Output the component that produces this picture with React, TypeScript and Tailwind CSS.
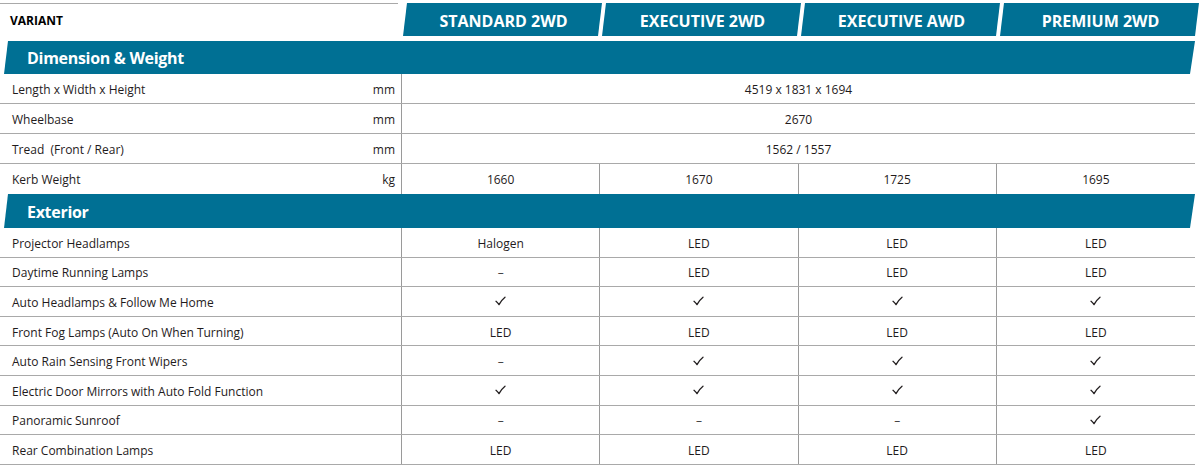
import React from "react";

const tabs = ["STANDARD 2WD", "EXECUTIVE 2WD", "EXECUTIVE AWD", "PREMIUM 2WD"];

type Row = { label: string; unit?: string; span?: string; vals?: string[] };

const dim: Row[] = [
  { label: "Length x Width x Height", unit: "mm", span: "4519 x 1831 x 1694" },
  { label: "Wheelbase", unit: "mm", span: "2670" },
  { label: "Tread\u00a0 (Front / Rear)", unit: "mm", span: "1562 / 1557" },
  { label: "Kerb Weight", unit: "kg", vals: ["1660", "1670", "1725", "1695"] },
];

const C = "\u2713";
const D = "\u2013";

const ext: Row[] = [
  { label: "Projector Headlamps", vals: ["Halogen", "LED", "LED", "LED"] },
  { label: "Daytime Running Lamps", vals: [D, "LED", "LED", "LED"] },
  { label: "Auto Headlamps & Follow Me Home", vals: [C, C, C, C] },
  { label: "Front Fog Lamps (Auto On When Turning)", vals: ["LED", "LED", "LED", "LED"] },
  { label: "Auto Rain Sensing Front Wipers", vals: [D, C, C, C] },
  { label: "Electric Door Mirrors with Auto Fold Function", vals: [C, C, C, C] },
  { label: "Panoramic Sunroof", vals: [D, D, D, C] },
  { label: "Rear Combination Lamps", vals: ["LED", "LED", "LED", "LED"] },
];

function Cell({ v }: { v: string }) {
  if (v === C)
    return (
      <svg width="11" height="10" viewBox="0 0 11 10" className="mb-[3px]">
        <path d="M1 5.3 Q2.8 6.8 4 8.6 Q6.5 4 10 1.2" fill="none" stroke="#231f20" strokeWidth="1.3" strokeLinecap="round" strokeLinejoin="round" />
      </svg>
    );
  if (v === D) return <span className="text-[#444]">{D}</span>;
  return <span>{v}</span>;
}

function DataRow({ r, h, last, pt = "pt-[3px]" }: { r: Row; h: string; last?: boolean; pt?: string }) {
  return (
    <div className={`flex w-[1195px] ${h} ${last ? "" : "border-b border-[#a9a9a9]"}`}>
      <div className={`flex w-[402px] shrink-0 items-center justify-between border-r border-[#9a9a9a] pl-[12px] pr-[6px] ${pt}`}>
        <span>{r.label}</span>
        {r.unit && <span>{r.unit}</span>}
      </div>
      {r.span ? (
        <div className={`flex flex-1 items-center justify-center ${pt}`}>{r.span}</div>
      ) : (
        <div className="grid flex-1 grid-cols-4">
          {r.vals!.map((v, i) => (
            <div
              key={i}
              className={`flex items-center justify-center ${pt} ${i < 3 ? "border-r border-[#9a9a9a]" : ""}`}
            >
              <Cell v={v} />
            </div>
          ))}
        </div>
      )}
    </div>
  );
}

function Section({ title, h }: { title: string; h: string }) {
  return (
    <div
      className={`ml-[4px] flex w-[1191px] ${h} items-center bg-[#007094] pl-[23px] pt-[1px] text-[16px] font-bold tracking-[-0.3px] text-white [clip-path:polygon(4px_0,100%_0,calc(100%-5px)_100%,0_100%)]`}
    >
      {title}
    </div>
  );
}

export default function App() {
  return (
    <div
      className="h-[468px] w-[1200px] overflow-hidden bg-white text-[12px] text-[#1f1b1c]"
      style={{ fontFamily: "'Open Sans', 'Noto Sans', sans-serif" }}
    >
      <div className="flex pt-[3px]">
        <div className="flex h-[33px] w-[398px] items-center border-t border-[#a9a9a9] pl-[10px] pt-[2px] text-[12px] font-bold text-black">
          VARIANT
        </div>
        <div className="ml-[5px] grid h-[33px] w-[796px] grid-cols-4">
          {tabs.map((t) => (
            <div
              key={t}
              className="flex items-center justify-center bg-[#007094] pl-[2px] pt-[2px] text-[16px] font-bold text-white [clip-path:polygon(4px_0,100%_0,calc(100%-4px)_100%,0_100%)]"
            >
              {t}
            </div>
          ))}
        </div>
      </div>
      <div className="h-[5px]" />
      <Section title="Dimension & Weight" h="h-[33px]" />
      {dim.map((r, i) => (
        <DataRow
          key={r.label}
          r={r}
          h="h-[30px]"
          last={i === dim.length - 1}
          pt={i === dim.length - 1 ? "pt-[1px]" : "pt-[3px]"}
        />
      ))}
      <Section title="Exterior" h="h-[34px]" />
      {ext.map((r) => (
        <DataRow key={r.label} r={r} h="h-[29.6px]" />
      ))}
    </div>
  );
}
